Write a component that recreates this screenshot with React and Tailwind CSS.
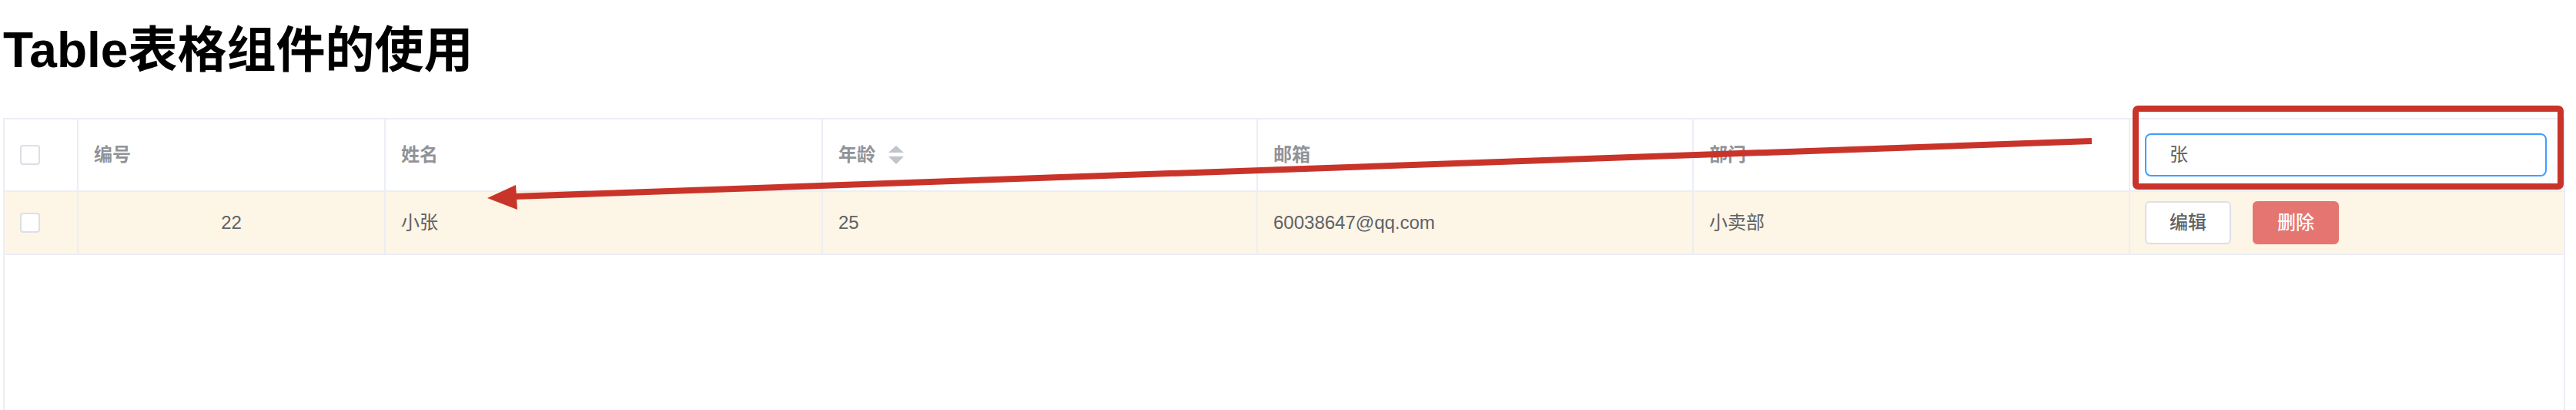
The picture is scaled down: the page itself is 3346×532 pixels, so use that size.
import React from "react";

const font = { fontFamily: '"Liberation Sans","Noto Sans CJK SC",sans-serif' };

function Checkbox() {
  return <div className="w-[26px] h-[26px] border-2 border-[#dcdfe6] rounded-[4px] bg-white" />;
}

function SortIcon() {
  return (
    <svg width="20" height="26" viewBox="0 0 20 26" className="ml-[17px]">
      <polygon points="0,10 20,10 10,1" fill="#c0c4cc" />
      <polygon points="0,15 20,15 10,25" fill="#c0c4cc" />
    </svg>
  );
}

export default function App() {
  const cell = "border-r-2 border-[#ebeef5] flex items-center pl-[20px]";
  const th = "text-[24px] font-bold text-[#909399]";
  const td = "text-[24px] text-[#606266]";
  return (
    <div className="relative w-[3346px] h-[532px] overflow-hidden bg-white pl-[4px] pr-[14px] pt-[28px]" style={font}>
      <h1 className="text-[64px] leading-[74px] font-bold text-black">Table表格组件的使用</h1>
      <div className="mt-[51px] h-[600px] border-2 border-[#ebeef5] bg-white">
        <div className="grid grid-cols-[96px_399px_568px_565px_566px_567px_1fr] h-[94px] border-b-2 border-[#ebeef5]">
          <div className={cell}><Checkbox /></div>
          <div className={`${cell} ${th}`}>编号</div>
          <div className={`${cell} ${th}`}>姓名</div>
          <div className={`${cell} ${th}`}>年龄<SortIcon /></div>
          <div className={`${cell} ${th}`}>邮箱</div>
          <div className={`${cell} ${th}`}>部门</div>
          <div className="flex items-center pl-[19px] pr-[22px]">
            <div className="w-full h-[56px] border-2 border-[#409eff] rounded-[8px] flex items-center pl-[30px] text-[24px] text-[#606266] bg-white">张</div>
          </div>
        </div>
        <div className="grid grid-cols-[96px_399px_568px_565px_566px_567px_1fr] h-[82px] border-b-2 border-[#ebeef5] bg-[#fdf5e6]">
          <div className={cell}><Checkbox /></div>
          <div className={`border-r-2 border-[#ebeef5] flex items-center justify-center ${td}`}>22</div>
          <div className={`${cell} ${td}`}>小张</div>
          <div className={`${cell} ${td}`}>25</div>
          <div className={`${cell} ${td}`}>60038647@qq.com</div>
          <div className={`${cell} ${td}`}>小卖部</div>
          <div className="flex items-center pl-[19px] gap-[28px]">
            <button className="w-[112px] h-[56px] border-2 border-[#dcdfe6] rounded-[6px] bg-white text-[24px] font-medium text-[#606266] flex items-center justify-center">编辑</button>
            <button className="w-[112px] h-[56px] border-2 border-[#e57570] rounded-[6px] bg-[#e57570] text-[24px] font-medium text-white flex items-center justify-center">删除</button>
          </div>
        </div>
      </div>
      <svg className="absolute top-0 left-0 pointer-events-none" width="3346" height="532" viewBox="0 0 3346 532">
        <rect x="2774" y="141" width="552" height="101" rx="3" fill="none" stroke="#c9342a" strokeWidth="8" />
        <line x1="2717" y1="183" x2="668" y2="255" stroke="#c9342a" strokeWidth="8" />
        <polygon points="633,257 670,240 672,272" fill="#c9342a" />
      </svg>
    </div>
  );
}
